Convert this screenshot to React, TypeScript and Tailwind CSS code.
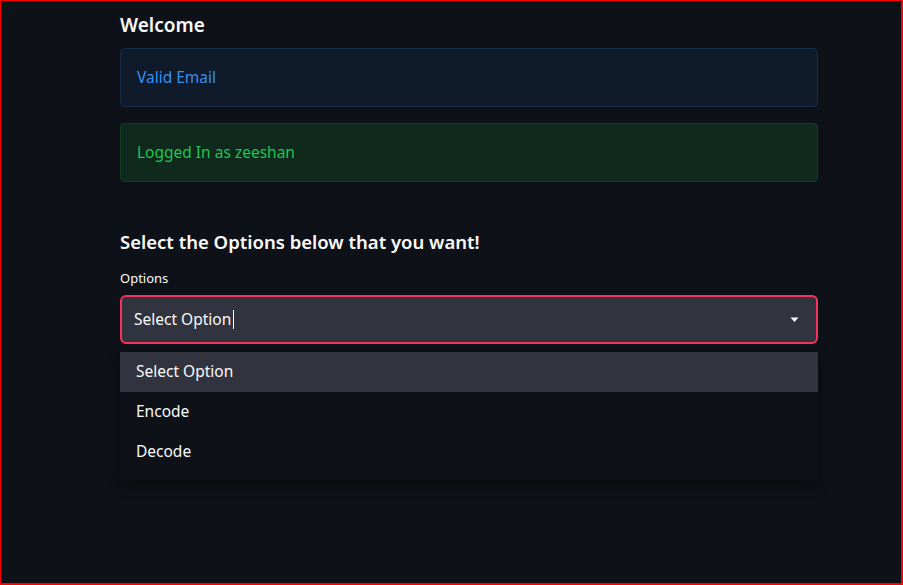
export default function App() {
  const options = ['Select Option', 'Encode', 'Decode'];

  return (
    <div
      className="h-[585px] w-[903px] overflow-hidden bg-[#0e1117] border-t border-l border-r-2 border-b-2 border-[#ff0000] text-[#fafafa]"
      style={{ fontFamily: '"Noto Sans", "Open Sans", sans-serif' }}
    >
      <div className="ml-[119px] w-[698px]">
        {/* Header */}
        <h3 className="pt-[10px] text-[19px] font-semibold leading-[28px]">Welcome</h3>

        {/* Alerts */}
        <div className="mt-[9px] flex h-[59px] items-center rounded-[4px] border border-[#172b44] bg-[#0f1b2b] px-4">
          <span className="text-[15.5px] text-[#3a8ef0]">Valid Email</span>
        </div>
        <div className="mt-[16px] flex h-[59px] items-center rounded-[4px] border border-[#173a22] bg-[#0f2a1c] px-4">
          <span className="text-[15.5px] text-[#21c354]">Logged In as zeeshan</span>
        </div>

        {/* Selector */}
        <h3 className="mt-[46px] text-[18.5px] font-semibold leading-[28px]">
          Select the Options below that you want!
        </h3>
        <label className="mt-3 block text-[13px] leading-5">Options</label>
        <div className="mt-[7px] flex h-[49px] items-center justify-between rounded-[6px] border-2 border-[#f6335e] bg-[#31333f] pl-3 pr-[17px]">
          <div className="flex items-center">
            <span className="text-[15.5px]">Select Option</span>
            <span className="ml-[2px] h-[19px] w-px bg-[#fafafa]" />
          </div>
          <svg width="9" height="6" viewBox="0 0 9 6">
            <path d="M0.5 0.5h8L4.5 5z" fill="#fafafa" />
          </svg>
        </div>

        {/* Dropdown menu */}
        <ul className="mt-[8px] pb-2 bg-[#0e1117] shadow-[0_4px_14px_rgba(0,0,0,0.45)] rounded-b-[4px]">
          {options.map((opt, i) => (
            <li
              key={opt}
              className={`flex h-10 items-center px-4 text-[15.5px] ${i === 0 ? 'bg-[#31333f]' : ''}`}
            >
              {opt}
            </li>
          ))}
        </ul>
      </div>
    </div>
  );
}
